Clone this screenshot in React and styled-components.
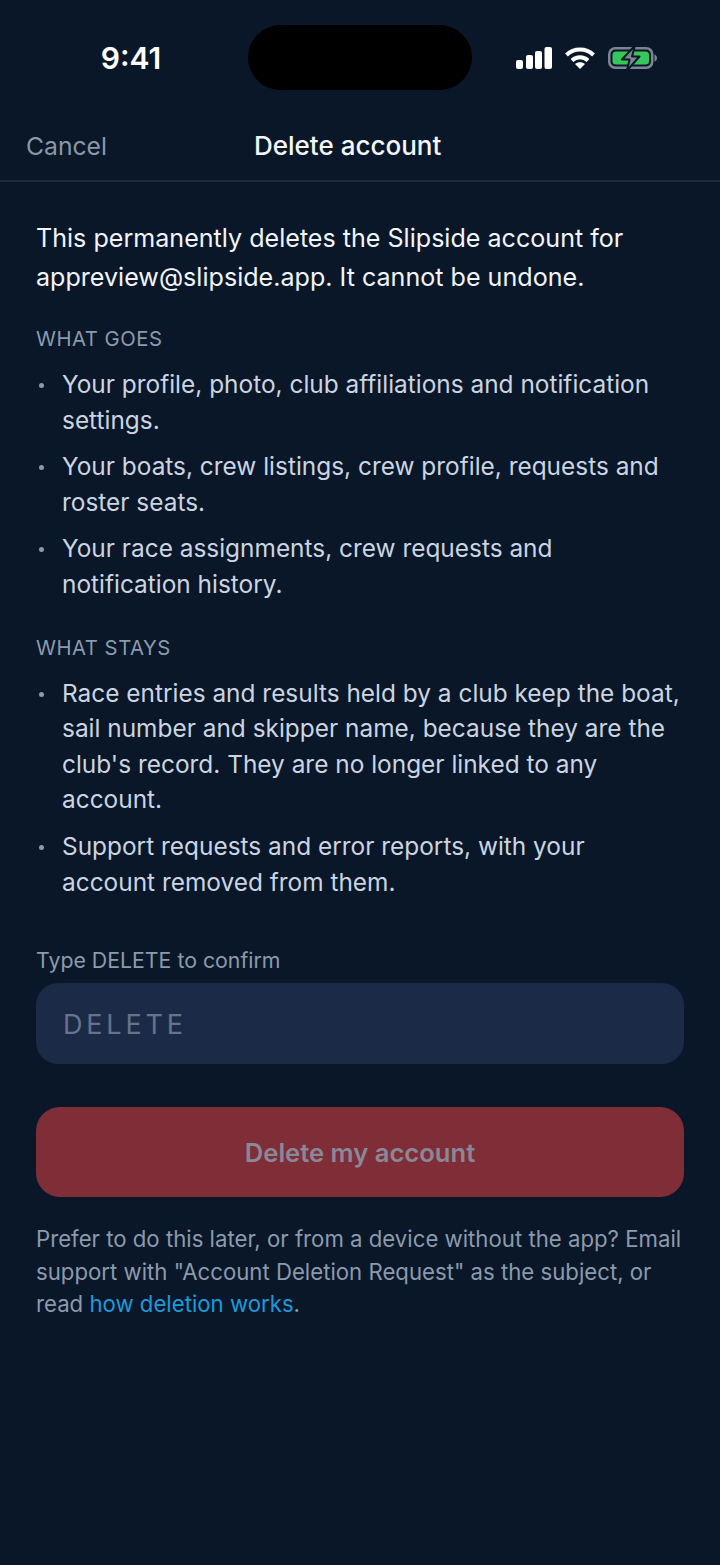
import React from "react";
import styled, { createGlobalStyle } from "styled-components";

const GlobalStyle = createGlobalStyle`
  html, body {
    margin: 0;
    padding: 0;
    background: #0a1729;
  }
  * {
    box-sizing: border-box;
  }
`;

const Screen = styled.div`
  width: 720px;
  height: 1565px;
  overflow: hidden;
  background: #0a1729;
  font-family: Inter, "Liberation Sans", sans-serif;
`;

const StatusBar = styled.div`
  height: 116px;
  padding-top: 25px;
  display: grid;
  grid-template-columns: 248px 224px 248px;
  align-items: start;
`;

const Clock = styled.div`
  height: 65px;
  display: flex;
  align-items: center;
  justify-content: center;
  padding-left: 14px;
  font-size: 30px;
  font-weight: 600;
  color: #ffffff;
`;

const Island = styled.div`
  height: 65px;
  border-radius: 33px;
  background: #000000;
`;

const StatusIcons = styled.div`
  height: 65px;
  display: flex;
  align-items: center;
  padding-left: 44px;
  gap: 13px;
`;

const NavBar = styled.div`
  height: 66px;
  display: grid;
  grid-template-columns: 228px auto;
  align-items: center;
  padding: 0 26px 5px;
  border-bottom: 2px solid #1c2a3c;
`;

const Cancel = styled.div`
  font-size: 24.7px;
  color: #8a97a8;
`;

const NavTitle = styled.div`
  font-size: 26px;
  font-weight: 500;
  color: #f5f7fa;
`;

const Body = styled.div`
  padding: 37px 36px 0;
`;

const Intro = styled.p`
  margin: 0;
  font-size: 25.1px;
  line-height: 39px;
  color: #f1f5f9;
`;

const SectionLabel = styled.div`
  margin-top: ${({ $top }) => $top}px;
  font-size: 20.3px;
  line-height: 28px;
  letter-spacing: 0.5px;
  color: #8c9aad;
`;

const BulletList = styled.ul`
  margin: 14px 0 0;
  padding: 0;
  list-style: none;
  display: flex;
  flex-direction: column;
  gap: 11px;
`;

const Bullet = styled.li`
  display: grid;
  grid-template-columns: 26px 1fr;
  font-size: 24.42px;
  line-height: 35.6px;
  color: #cbd5e1;
`;

const Dot = styled.span`
  width: 5px;
  height: 5px;
  margin: 16px 0 0 3px;
  border-radius: 50%;
  background: #8c9aad;
`;

const FieldLabel = styled.div`
  margin-top: 46px;
  font-size: 21.3px;
  line-height: 28px;
  color: #8c9aad;
`;

const Field = styled.div`
  margin-top: 9px;
  height: 81px;
  padding: 2px 27px 0;
  display: flex;
  align-items: center;
  border-radius: 22px;
  background: #1b2b47;
  font-size: 27px;
  letter-spacing: 3.8px;
  color: #667389;
`;

const DeleteButton = styled.div`
  margin-top: 43px;
  height: 90px;
  display: flex;
  align-items: center;
  justify-content: center;
  border-radius: 24px;
  background: #7f2e37;
  font-size: 25.6px;
  font-weight: 600;
  color: #8a8796;
`;

const Note = styled.p`
  margin: 26px 0 0;
  font-size: 22.2px;
  line-height: 32.5px;
  color: #8c9aad;
`;

const NoteLink = styled.span`
  color: #1e9ad9;
`;

const SignalIcon = () => (
  <svg width="36" height="22" viewBox="0 0 36 22" fill="#ffffff">
    <rect x="0" y="13" width="7" height="9" rx="2" />
    <rect x="10" y="8" width="7" height="14" rx="2" />
    <rect x="19" y="4" width="7" height="18" rx="2" />
    <rect x="28.500" y="0" width="7.500" height="22" rx="2" />
  </svg>
);

const WifiIcon = () => (
  <svg width="30" height="22" viewBox="0 0 30 22" fill="none" stroke="#ffffff" strokeWidth="4">
    <path d="M1.500 8C9 0.800 21 0.800 28.500 8" />
    <path d="M7 13.500C11.500 9.200 18.500 9.200 23 13.500" />
    <path d="M15 22L10 17C12.800 14.800 17.200 14.800 20 17Z" fill="#ffffff" stroke="none" />
  </svg>
);

const BatteryIcon = () => (
  <svg width="49" height="26" viewBox="0 0 49 26" fill="none">
    <rect x="1.250" y="3.250" width="43" height="19.500" rx="6" stroke="#7d8590" strokeWidth="2.500" />
    <rect x="4.500" y="6.500" width="36.500" height="13" rx="3.500" fill="#34c759" />
    <path d="M46.500 9.500C48.200 10 49 11.500 49 13C49 14.500 48.200 16 46.500 16.500Z" fill="#7d8590" />
    <path d="M27 0.500L14 14.500H21.500L19 25.500L31.500 11.500H24Z" fill="#7d8590" stroke="#0a1729" strokeWidth="2" strokeLinejoin="round" />
  </svg>
);

const goes = [
  "Your profile, photo, club affiliations and notification settings.",
  "Your boats, crew listings, crew profile, requests and roster seats.",
  "Your race assignments, crew requests and notification history.",
];

const stays = [
  "Race entries and results held by a club keep the boat, sail number and skipper name, because they are the club's record. They are no longer linked to any account.",
  "Support requests and error reports, with your account removed from them.",
];

const App = () => {
  return (
    <Screen>
      <GlobalStyle />
      <StatusBar>
        <Clock>9:41</Clock>
        <Island />
        <StatusIcons>
          <SignalIcon />
          <WifiIcon />
          <BatteryIcon />
        </StatusIcons>
      </StatusBar>

      <NavBar>
        <Cancel>Cancel</Cancel>
        <NavTitle>Delete account</NavTitle>
      </NavBar>

      <Body>
        <Intro>
          This permanently deletes the Slipside account for appreview@slipside.app. It cannot be
          undone.
        </Intro>

        <SectionLabel $top={28}>WHAT GOES</SectionLabel>
        <BulletList>
          {goes.map((item) => (
            <Bullet key={item}>
              <Dot />
              <span>{item}</span>
            </Bullet>
          ))}
        </BulletList>

        <SectionLabel $top={31}>WHAT STAYS</SectionLabel>
        <BulletList>
          {stays.map((item) => (
            <Bullet key={item}>
              <Dot />
              <span>{item}</span>
            </Bullet>
          ))}
        </BulletList>

        <FieldLabel>Type DELETE to confirm</FieldLabel>
        <Field>DELETE</Field>
        <DeleteButton>Delete my account</DeleteButton>

        <Note>
          Prefer to do this later, or from a device without the app? Email support with "Account
          Deletion Request" as the subject, or read <NoteLink>how deletion works</NoteLink>.
        </Note>
      </Body>
    </Screen>
  );
};

export default App;
